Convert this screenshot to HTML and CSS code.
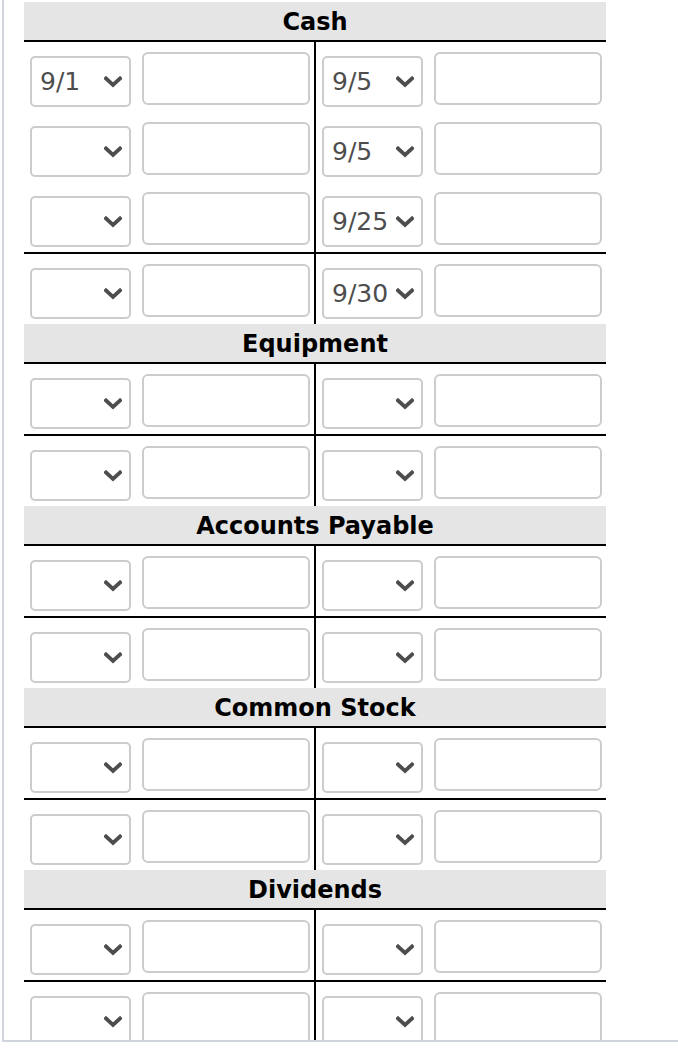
FILE: index.html
```html
<!DOCTYPE html>
<html lang="en">
<head>
<meta charset="utf-8">
<title>T-Accounts</title>
<link rel="stylesheet" href="styles.css">
</head>
<body>
<div class="frame">

  <section class="acct">
    <div class="acct-title">Cash</div>
    <div class="row">
      <div class="cell"><div class="sel"><span class="val">9/1</span><svg class="chev" viewBox="0 0 18 12"><path d="M2 2.5 L9 9 L16 2.5"/></svg></div><input class="amt" type="text"></div>
      <div class="cell"><div class="sel"><span class="val">9/5</span><svg class="chev" viewBox="0 0 18 12"><path d="M2 2.5 L9 9 L16 2.5"/></svg></div><input class="amt" type="text"></div>
    </div>
    <div class="row">
      <div class="cell"><div class="sel"><span class="val"></span><svg class="chev" viewBox="0 0 18 12"><path d="M2 2.5 L9 9 L16 2.5"/></svg></div><input class="amt" type="text"></div>
      <div class="cell"><div class="sel"><span class="val">9/5</span><svg class="chev" viewBox="0 0 18 12"><path d="M2 2.5 L9 9 L16 2.5"/></svg></div><input class="amt" type="text"></div>
    </div>
    <div class="row">
      <div class="cell"><div class="sel"><span class="val"></span><svg class="chev" viewBox="0 0 18 12"><path d="M2 2.5 L9 9 L16 2.5"/></svg></div><input class="amt" type="text"></div>
      <div class="cell"><div class="sel"><span class="val">9/25</span><svg class="chev" viewBox="0 0 18 12"><path d="M2 2.5 L9 9 L16 2.5"/></svg></div><input class="amt" type="text"></div>
    </div>
    <div class="row total">
      <div class="cell"><div class="sel"><span class="val"></span><svg class="chev" viewBox="0 0 18 12"><path d="M2 2.5 L9 9 L16 2.5"/></svg></div><input class="amt" type="text"></div>
      <div class="cell"><div class="sel"><span class="val">9/30</span><svg class="chev" viewBox="0 0 18 12"><path d="M2 2.5 L9 9 L16 2.5"/></svg></div><input class="amt" type="text"></div>
    </div>
  </section>

  <section class="acct">
    <div class="acct-title">Equipment</div>
    <div class="row">
      <div class="cell"><div class="sel"><span class="val"></span><svg class="chev" viewBox="0 0 18 12"><path d="M2 2.5 L9 9 L16 2.5"/></svg></div><input class="amt" type="text"></div>
      <div class="cell"><div class="sel"><span class="val"></span><svg class="chev" viewBox="0 0 18 12"><path d="M2 2.5 L9 9 L16 2.5"/></svg></div><input class="amt" type="text"></div>
    </div>
    <div class="row total">
      <div class="cell"><div class="sel"><span class="val"></span><svg class="chev" viewBox="0 0 18 12"><path d="M2 2.5 L9 9 L16 2.5"/></svg></div><input class="amt" type="text"></div>
      <div class="cell"><div class="sel"><span class="val"></span><svg class="chev" viewBox="0 0 18 12"><path d="M2 2.5 L9 9 L16 2.5"/></svg></div><input class="amt" type="text"></div>
    </div>
  </section>

  <section class="acct">
    <div class="acct-title">Accounts Payable</div>
    <div class="row">
      <div class="cell"><div class="sel"><span class="val"></span><svg class="chev" viewBox="0 0 18 12"><path d="M2 2.5 L9 9 L16 2.5"/></svg></div><input class="amt" type="text"></div>
      <div class="cell"><div class="sel"><span class="val"></span><svg class="chev" viewBox="0 0 18 12"><path d="M2 2.5 L9 9 L16 2.5"/></svg></div><input class="amt" type="text"></div>
    </div>
    <div class="row total">
      <div class="cell"><div class="sel"><span class="val"></span><svg class="chev" viewBox="0 0 18 12"><path d="M2 2.5 L9 9 L16 2.5"/></svg></div><input class="amt" type="text"></div>
      <div class="cell"><div class="sel"><span class="val"></span><svg class="chev" viewBox="0 0 18 12"><path d="M2 2.5 L9 9 L16 2.5"/></svg></div><input class="amt" type="text"></div>
    </div>
  </section>

  <section class="acct">
    <div class="acct-title">Common Stock</div>
    <div class="row">
      <div class="cell"><div class="sel"><span class="val"></span><svg class="chev" viewBox="0 0 18 12"><path d="M2 2.5 L9 9 L16 2.5"/></svg></div><input class="amt" type="text"></div>
      <div class="cell"><div class="sel"><span class="val"></span><svg class="chev" viewBox="0 0 18 12"><path d="M2 2.5 L9 9 L16 2.5"/></svg></div><input class="amt" type="text"></div>
    </div>
    <div class="row total">
      <div class="cell"><div class="sel"><span class="val"></span><svg class="chev" viewBox="0 0 18 12"><path d="M2 2.5 L9 9 L16 2.5"/></svg></div><input class="amt" type="text"></div>
      <div class="cell"><div class="sel"><span class="val"></span><svg class="chev" viewBox="0 0 18 12"><path d="M2 2.5 L9 9 L16 2.5"/></svg></div><input class="amt" type="text"></div>
    </div>
  </section>

  <section class="acct">
    <div class="acct-title">Dividends</div>
    <div class="row">
      <div class="cell"><div class="sel"><span class="val"></span><svg class="chev" viewBox="0 0 18 12"><path d="M2 2.5 L9 9 L16 2.5"/></svg></div><input class="amt" type="text"></div>
      <div class="cell"><div class="sel"><span class="val"></span><svg class="chev" viewBox="0 0 18 12"><path d="M2 2.5 L9 9 L16 2.5"/></svg></div><input class="amt" type="text"></div>
    </div>
    <div class="row total">
      <div class="cell"><div class="sel"><span class="val"></span><svg class="chev" viewBox="0 0 18 12"><path d="M2 2.5 L9 9 L16 2.5"/></svg></div><input class="amt" type="text"></div>
      <div class="cell"><div class="sel"><span class="val"></span><svg class="chev" viewBox="0 0 18 12"><path d="M2 2.5 L9 9 L16 2.5"/></svg></div><input class="amt" type="text"></div>
    </div>
  </section>

</div>
</body>
</html>
```

FILE: styles.css
```css
* {
  box-sizing: border-box;
}

html, body {
  margin: 0;
  padding: 0;
  background: #ffffff;
}

body {
  font-family: "DejaVu Sans", Verdana, sans-serif;
  color: #000;
}

.frame {
  margin-left: 2px;
  height: 1042px;
  padding: 2px 0 0 20px;
  border-left: 2px solid #d0d4dc;
  border-bottom: 2px solid #d0d4dc;
  overflow: hidden;
}

.acct {
  width: 582px;
}

.acct-title {
  height: 40px;
  padding-top: 2px;
  background: #e5e5e5;
  border-bottom: 2px solid #000;
  font-weight: bold;
  font-size: 24px;
  line-height: 36px;
  text-align: center;
}

.row {
  display: grid;
  grid-template-columns: 292px 290px;
}

.row.total {
  border-top: 2px solid #000;
}

.cell {
  height: 70px;
  display: flex;
  align-items: flex-start;
  padding-left: 6px;
}

.cell:first-child {
  border-right: 2px solid #000;
}

.sel {
  width: 101px;
  height: 51px;
  margin-top: 14px;
  border: 2px solid #cccccc;
  border-radius: 5px;
  display: flex;
  align-items: center;
  justify-content: space-between;
  padding: 0 7px 0 8px;
  background: #fff;
}

.val {
  font-size: 25px;
  color: #4d4d4d;
  line-height: 1;
}

.chev {
  width: 18px;
  height: 12px;
  flex: none;
}

.chev path {
  fill: none;
  stroke: #4d4d4d;
  stroke-width: 3.8;
  stroke-linecap: square;
  stroke-linejoin: miter;
}

.amt {
  width: 168px;
  height: 53px;
  margin: 10px 0 0 11px;
  border: 2px solid #cccccc;
  border-radius: 6px;
  background: #fff;
  font-family: "DejaVu Sans", Verdana, sans-serif;
  font-size: 20px;
  padding: 0 8px;
  outline: none;
}
```
